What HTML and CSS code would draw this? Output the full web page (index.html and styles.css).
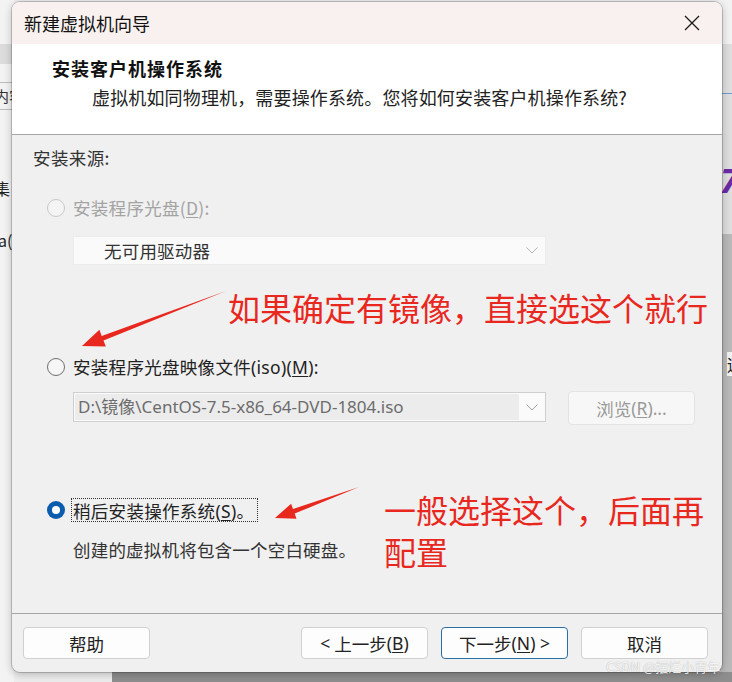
FILE: index.html
```html
<!DOCTYPE html>
<html lang="zh-CN">
<head>
<meta charset="utf-8">
<title>新建虚拟机向导</title>
<link rel="stylesheet" href="styles.css">
</head>
<body>
<div class="desk">
  <div class="desk-left">
    <div class="dl-band"></div>
    <div class="dl-tab">内容</div>
    <div class="dl-txt dl-ji">集</div>
    <div class="dl-txt dl-a">a(</div>
  </div>
  <div class="desk-right">
    <div class="dr-band"></div>
    <div class="dr-line"></div>
    <div class="dr-seven">7</div>
    <div class="dr-dark"></div>
    <div class="dr-yuan">远</div>
  </div>
  <div class="desk-bottom"></div>
</div>

<div class="dialog">
  <div class="titlebar">
    <span class="title">新建虚拟机向导</span>
    <svg class="close" width="16" height="16" viewBox="0 0 16 16"><path d="M1 1L15 15M15 1L1 15" stroke="#1a1a1a" stroke-width="1.3" fill="none"/></svg>
  </div>
  <div class="header">
    <div class="h1">安装客户机操作系统</div>
    <div class="h2">虚拟机如同物理机，需要操作系统。您将如何安装客户机操作系统?</div>
  </div>
  <div class="content">
    <div class="section">安装来源:</div>
    <div class="opt opt-first disabled"><span class="radio"></span><span class="label">安装程序光盘(<u>D</u>):</span></div>
    <div class="select">
      <span class="select-text">无可用驱动器</span>
      <svg class="chev" width="12" height="7" viewBox="0 0 12 7"><path d="M0.5 0.5L6 6L11.5 0.5" stroke="#b5b5b5" stroke-width="1" fill="none"/></svg>
    </div>
    <div class="opt opt-iso"><span class="radio"></span><span class="label">安装程序光盘映像文件<span class="lat">(iso)(<u>M</u>):</span></span></div>
    <div class="isorow">
      <div class="combo">
        <span class="field">D:\镜像\CentOS-7.5-x86_64-DVD-1804.iso</span>
        <span class="combo-arrow"><svg width="12" height="7" viewBox="0 0 12 7"><path d="M0.5 0.5L6 6L11.5 0.5" stroke="#a0a0a0" stroke-width="1" fill="none"/></svg></span>
      </div>
      <div class="btn browse">浏览<span class="lat">(<u>R</u>)...</span></div>
    </div>
    <div class="opt opt-later"><span class="radio checked"></span><span class="label focus">稍后安装操作系统<span class="lat">(<u>S</u>)</span>。</span></div>
    <div class="desc">创建的虚拟机将包含一个空白硬盘。</div>
  </div>
  <div class="footer">
    <div class="btn fbtn">帮助</div>
    <div class="fgroup">
      <div class="btn fbtn"><span class="lat">&lt;</span> 上一步<span class="lat">(<u>B</u>)</span></div>
      <div class="btn fbtn primary">下一步<span class="lat">(<u>N</u>) &gt;</span></div>
      <div class="btn fbtn">取消</div>
    </div>
  </div>
</div>

<div class="overlay">
  <svg class="arrows" width="732" height="682" viewBox="0 0 732 682">
    <polygon fill="#e8281e" points="82,346 99.4,329.8 101.7,335.9 226,291 103.5,340.5 105.8,346.6"/>
    <polygon fill="#e8281e" points="275,518 291.1,503.7 293,508.9 359,487 294.7,513.6 296.5,518.7"/>
  </svg>
  <div class="note note1">如果确定有镜像，直接选这个就行</div>
  <div class="note note2">一般选择这个，后面再</div>
  <div class="note note3">配置</div>
  <div class="watermark">CSDN @摆烂小青年</div>
</div>
</body>
</html>
```

FILE: styles.css
```css
* { box-sizing: border-box; }
html, body { margin: 0; padding: 0; }
body {
  width: 732px;
  height: 682px;
  overflow: hidden;
  position: relative;
  background: #ededed;
  font-family: "Noto Sans CJK SC", "Noto Sans", sans-serif;
  color: #1e1e1e;
  padding: 2px 0 0 12px;
}
u { text-decoration: underline; text-underline-offset: 2px; text-decoration-thickness: 1px; }
.lat { font-family: "Noto Sans", "Noto Sans CJK SC", sans-serif; }

/* desktop behind */
.desk { position: absolute; left: 0; top: 0; width: 732px; height: 682px; }
.desk-left { position: absolute; left: 0; top: 0; width: 14px; height: 682px; background: #f3f3f3; overflow: hidden; }
.dl-band { position: absolute; left: 0; top: 44px; width: 14px; height: 20px; background: #dcdcdc; }
.dl-tab { position: absolute; left: -6px; top: 82px; width: 40px; height: 28px; border-top: 1px solid #bdbdbd; border-bottom: 1px solid #bdbdbd; font-size: 15px; line-height: 26px; color: #333; }
.dl-txt { position: absolute; left: -2px; font-size: 16px; color: #222; }
.dl-ji { top: 176px; left: -6px; }
.dl-a { top: 228px; }
.desk-right { position: absolute; right: 0; top: 0; width: 14px; height: 682px; background: #f2f2f2; overflow: hidden; }
.dr-band { position: absolute; left: 0; top: 44px; width: 14px; height: 190px; background: #dedede; }
.dr-line { position: absolute; left: 0; top: 93px; width: 14px; height: 1px; background: #6d9ed0; }
.dr-seven { position: absolute; left: 2px; top: 160px; font-size: 34px; font-weight: bold; font-style: italic; color: #6b2ba4; line-height: 40px; font-family: "Noto Sans", sans-serif; }
.dr-dark { position: absolute; left: 0; top: 234px; width: 14px; height: 448px; background: #b9b9b9; }
.dr-yuan { position: absolute; left: 9px; top: 352px; font-size: 16px; color: #222; background: #f0f0f0; width: 20px; }
.desk-bottom { position: absolute; left: 112px; top: 672px; width: 620px; height: 10px; background: #8e8e8e; }

/* dialog */
.dialog {
  position: relative;
  width: 710px;
  height: 670px;
  border-radius: 8px;
  overflow: hidden;
  background: #f0f0f0;
  box-shadow: 0 0 0 1px rgba(0,0,0,0.18), 0 2px 8px rgba(0,0,0,0.25);
  display: flex;
  flex-direction: column;
}
.titlebar {
  height: 42px;
  flex: none;
  background: #f8f1ef;
  display: flex;
  align-items: center;
  justify-content: space-between;
  padding: 0 22px 0 12px;
}
.title { font-size: 18px; color: #111; letter-spacing: 0; }
.close { display: block; }

.header {
  height: 90px;
  flex: none;
  background: #fff;
  padding: 11px 0 0 40px;
}
.h1 { font-size: 18px; font-weight: bold; line-height: 26px; color: #111; letter-spacing: 1px; }
.h2 { font-size: 18px; line-height: 26px; margin-top: 3px; padding-left: 40px; color: #222; letter-spacing: 0.15px; }

.content {
  height: 480px;
  flex: none;
  border-top: 1px solid #a6a6a6;
  border-bottom: 1px solid #a6a6a6;
  padding: 11px 0 0 21px;
  font-size: 17.5px;
}
.section { line-height: 24px; height: 24px; color: #333; letter-spacing: 0.4px; }
.opt { display: flex; align-items: center; height: 24px; padding-left: 14px; gap: 8px; color: #222; }
.opt-first { margin-top: 26px; }
.opt-iso { margin-top: 90px; }
.opt-later { margin-top: 73px; }
.opt.disabled { color: #a3a3a3; }
.opt .label { line-height: 24px; letter-spacing: 0.3px; }
.radio {
  width: 18px; height: 18px; flex: none;
  border-radius: 50%;
  border: 1px solid #6e6e6e;
  background: #f6f6f6;
  position: relative;
}
.opt.disabled .radio { border-color: #c8c8c8; background: #f4f4f4; }
.radio.checked { border: none; background: #0b5cad; }
.radio.checked::after {
  content: "";
  position: absolute;
  left: 5px; top: 5px;
  width: 8px; height: 8px;
  border-radius: 50%;
  background: #fff;
}
.focus { border: 1px dotted #333; padding: 0 3px 0 1px; margin-left: -2px; height: 24px; line-height: 22px; }

.select {
  margin: 16px 0 0 40px;
  width: 473px;
  height: 29px;
  background: #fafafa;
  border: 1px solid #ececec;
  display: flex;
  align-items: center;
  justify-content: space-between;
  padding: 0 7px 0 30px;
  color: #333;
}
.select-text { letter-spacing: 0.2px; }

.isorow { display: flex; align-items: flex-start; margin: 12px 0 0 40px; gap: 22px; height: 34px; }
.combo {
  margin-top: 1px;
  width: 473px;
  height: 30px;
  border: 1px solid #cfcfcf;
  background: #fafafa;
  display: flex;
  align-items: stretch;
}
.field {
  width: 444px;
  margin: 1px 0 1px 1px;
  background: #ececec;
  color: #6c6c6c;
  padding-left: 3px;
  line-height: 26px;
  font-family: "Noto Sans", "Noto Sans CJK SC", sans-serif;
  font-size: 17px;
  white-space: nowrap;
  overflow: hidden;
}
.combo-arrow { flex: 1; display: flex; align-items: center; justify-content: center; }
.btn {
  width: 127px;
  border-radius: 4px;
  display: flex;
  align-items: center;
  justify-content: center;
}
.browse { height: 34px; background: #f7f7f7; border: 1px solid #e3e3e3; color: #9a9a9a; }

.desc { margin: 16px 0 0 40px; line-height: 24px; color: #333; letter-spacing: 0.2px; }

.footer {
  flex: 1;
  display: flex;
  align-items: flex-start;
  justify-content: space-between;
  padding: 13px 14px 0 11px;
}
.fgroup { display: flex; gap: 13px; }
.fbtn {
  height: 32px;
  background: #fdfdfd;
  border: 1px solid #d0d0d0;
  font-size: 17.5px;
  color: #222;
  gap: 0;
  white-space: pre;
}
.fbtn.primary { border-color: #2a6ea6; }

/* overlay annotations */
.overlay { position: absolute; left: 0; top: 0; width: 732px; height: 682px; pointer-events: none; }
.arrows { position: absolute; left: 0; top: 0; }
.note { position: absolute; color: #e8281e; font-size: 32px; line-height: 40px; height: 40px; white-space: nowrap; }
.note1 { left: 228px; top: 287px; }
.note2 { left: 384px; top: 489px; }
.note3 { left: 384px; top: 531px; }
.watermark {
  position: absolute;
  left: 606px; top: 657px;
  font-size: 13px;
  color: rgba(255,255,255,0.9);
  text-shadow: 0 0 1px rgba(0,0,0,0.35);
  white-space: nowrap;
}
```
